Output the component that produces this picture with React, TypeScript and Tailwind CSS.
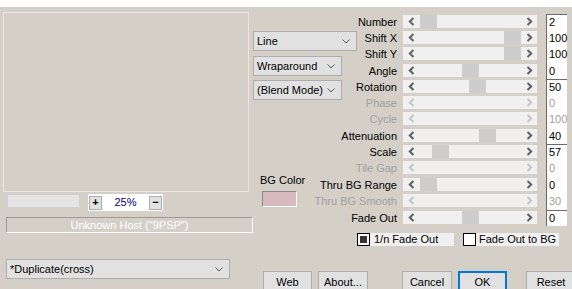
import React from "react";

type Row = { label: string; value: string; enabled: boolean; thumb?: number; topLine?: boolean; h: string };

const rows: Row[] = [
  { label: "Number", value: "2", enabled: true, thumb: 0, topLine: true, h: "h-[16px]" },
  { label: "Shift X", value: "100", enabled: true, thumb: 84, h: "h-[16px]" },
  { label: "Shift Y", value: "100", enabled: true, thumb: 84, h: "h-[17px]" },
  { label: "Angle", value: "0", enabled: true, thumb: 42, h: "h-[16px]" },
  { label: "Rotation", value: "50", enabled: true, thumb: 49, topLine: true, h: "h-[16px]" },
  { label: "Phase", value: "0", enabled: false, h: "h-[16px]" },
  { label: "Cycle", value: "100", enabled: false, h: "h-[17px]" },
  { label: "Attenuation", value: "40", enabled: true, thumb: 59, h: "h-[16px]" },
  { label: "Scale", value: "57", enabled: true, thumb: 12, topLine: true, h: "h-[16px]" },
  { label: "Tile Gap", value: "0", enabled: false, h: "h-[17px]" },
  { label: "Thru BG Range", value: "0", enabled: true, thumb: 0, h: "h-[16px]" },
  { label: "Thru BG Smooth", value: "30", enabled: false, h: "h-[17px]" },
  { label: "Fade Out", value: "0", enabled: true, thumb: 42, topLine: true, h: "h-[16px]" },
];

function Chevron() {
  return (
    <svg width="8" height="5" viewBox="0 0 8 5" className="shrink-0">
      <polyline points="0.5,0.5 4,4 7.5,0.5" fill="none" stroke="#5a5a5a" strokeWidth="1" />
    </svg>
  );
}

function Arrow({ dir, enabled }: { dir: "l" | "r"; enabled: boolean }) {
  const c = enabled ? "#606060" : "#c4c4c4";
  return (
    <svg width="7" height="9" viewBox="0 0 7 9">
      {dir === "l" ? (
        <polyline points="5.5,1 1.8,4.5 5.5,8" fill="none" stroke={c} strokeWidth="2" />
      ) : (
        <polyline points="1.5,1 5.2,4.5 1.5,8" fill="none" stroke={c} strokeWidth="2" />
      )}
    </svg>
  );
}

function Select({ text, w }: { text: string; w: string }) {
  return (
    <div className={`${w} h-[20px] bg-[#e1e1e1] border border-[#adadad] flex items-center justify-between pl-[3px] pr-[6px]`}>
      <span className="text-black whitespace-nowrap">{text}</span>
      <Chevron />
    </div>
  );
}

function Btn({ text, cls }: { text: string; cls: string }) {
  return (
    <div className={`${cls} h-[23px] bg-[#e1e1e1] flex items-center justify-center text-black`}>{text}</div>
  );
}

export default function App() {
  return (
    <div
      className="w-[572px] h-[289px] overflow-hidden bg-[#d4d0c8] text-[11px] leading-[13px]"
      style={{ fontFamily: '"Liberation Sans", Arial, sans-serif' }}
    >
      <div className="h-[7px] bg-white" />
      <div className="flex">
        {/* left column */}
        <div className="w-[253px] shrink-0 flex flex-col">
          <div className="mt-[5px] ml-[3px] w-[246px] h-[180px] border border-[#e9e7e2]" />
          <div className="mt-[2px] flex items-start">
            <div className="ml-[7px] w-[73px] h-[14px] bg-[#e4e4e4] border border-[#cfcfcf]" />
            <div className="ml-[8px] w-[75px] h-[17px] bg-white flex items-center px-[1px]">
              <div className="w-[13px] h-[14px] bg-[#e1e1e1] border border-[#adadad] flex items-center justify-center text-black font-bold leading-none">+</div>
              <div className="flex-1 text-center text-[#000080]">25%</div>
              <div className="w-[13px] h-[14px] bg-[#e1e1e1] border border-[#adadad] flex items-center justify-center text-black font-bold leading-none">−</div>
            </div>
          </div>
          <div className="mt-[6px] ml-[6px] w-[247px] h-[16px] border-t border-l border-[#9a9a9a] border-r border-b border-r-white border-b-white flex items-center justify-center text-white">
            Unknown Host ("9PSP")
          </div>
          <div className="mt-[26px] ml-[6px]">
            <Select text="*Duplicate(cross)" w="w-[224px]" />
          </div>
        </div>

        {/* right column */}
        <div className="flex-1 flex flex-col">
          <div className="flex">
            <div className="w-[104px] shrink-0 flex flex-col">
              <div className="mt-[24px]">
                <Select text="Line" w="w-[104px]" />
              </div>
              <div className="mt-[5px]">
                <Select text="Wraparound" w="w-[89px]" />
              </div>
              <div className="mt-[4px]">
                <Select text="(Blend Mode)" w="w-[89px]" />
              </div>
              <div className="mt-[73px] ml-[7px] h-[14px] text-black leading-[14px] whitespace-nowrap">BG Color</div>
              <div className="mt-[4px] ml-[9px] w-[35px] h-[16px] bg-[#d6babe] border-t border-l border-[#8a8a8a] border-r border-b border-r-white border-b-white" />
            </div>
            <div className="mt-[7px] flex flex-col">
              {rows.map((r) => (
                <div key={r.label} className={`${r.h} flex`}>
                  <div
                    className={`w-[46px] shrink-0 flex justify-end items-center pr-[6px] whitespace-nowrap ${
                      r.enabled ? "text-black" : "text-[#a0a0a0]"
                    }`}
                  >
                    {r.label}
                  </div>
                  <div className="w-[134px] shrink-0 h-[13px] mt-[1px] bg-[#f0f0f0] flex items-stretch">
                    <div className="w-[17px] shrink-0 flex items-center justify-center">
                      <Arrow dir="l" enabled={r.enabled} />
                    </div>
                    <div className="flex-1 flex">
                      {r.thumb !== undefined && (
                        <div className="w-[17px] h-full bg-[#cdcdcd]" style={{ marginLeft: r.thumb }} />
                      )}
                    </div>
                    <div className="w-[16px] shrink-0 flex items-center justify-center">
                      <Arrow dir="r" enabled={r.enabled} />
                    </div>
                  </div>
                  <div className="w-[9px] shrink-0" />
                  <div
                    className={`flex-1 bg-white border-l border-[#6a6a6a] pl-[2px] flex items-center ${
                      r.topLine ? "border-t" : ""
                    } ${r.enabled ? "text-black" : "text-[#a0a0a0]"}`}
                  >
                    {r.value}
                  </div>
                </div>
              ))}
            </div>
          </div>

          <div className="mt-[7px] ml-[104px] flex items-center h-[13px]">
            <div className="w-[13px] h-[13px] bg-white border border-black flex items-center justify-center">
              <div className="w-[7px] h-[7px] bg-[#333333]" />
            </div>
            <div className="w-[84px] h-[13px] bg-[#f0f0f0] pl-[4px] flex items-center text-black whitespace-nowrap">1/n Fade Out</div>
            <div className="ml-[9px] w-[13px] h-[13px] bg-white border border-black" />
            <div className="w-[83px] h-[13px] bg-[#f0f0f0] pl-[3px] flex items-center text-black whitespace-nowrap">Fade Out to BG</div>
          </div>

          <div className="mt-[25px] flex">
            <Btn text="Web" cls="ml-[10px] w-[49px] border border-[#adadad]" />
            <Btn text="About..." cls="ml-[6px] w-[50px] border border-[#adadad]" />
            <Btn text="Cancel" cls="ml-[34px] w-[50px] border border-[#adadad]" />
            <Btn text="OK" cls="ml-[6px] w-[49px] border-2 border-[#0078d7]" />
            <Btn text="Reset" cls="ml-[19px] w-[50px] shrink-0 border border-[#adadad]" />
          </div>
        </div>
      </div>
    </div>
  );
}
